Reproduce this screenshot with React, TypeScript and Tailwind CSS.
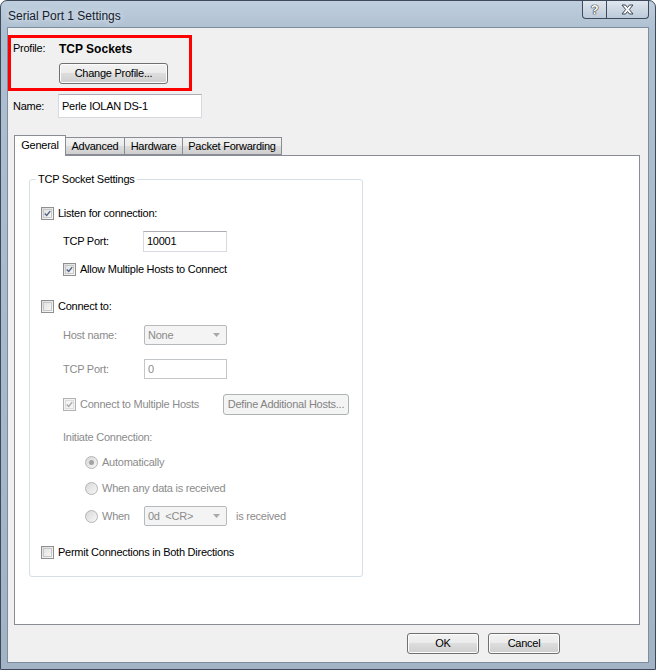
import React from "react";

const font = "font-['Liberation_Sans',Arial,sans-serif]";

const Check = ({ checked, disabled }: { checked?: boolean; disabled?: boolean }) => (
  <span
    className={`inline-flex w-[13px] h-[13px] shrink-0 items-center justify-center border ${
      disabled ? "border-[#b1b1b1] bg-[#f4f4f4]" : "border-[#8e8f8f] bg-[linear-gradient(135deg,#dcdcdc,#fbfbfb)]"
    }`}
  >
    <span className={`flex w-[9px] h-[9px] items-center justify-center border ${disabled ? "border-[#dcdcdc]" : "border-[#c7c7c7] bg-[linear-gradient(135deg,#e2e2e2,#f6f6f6)]"}`}>
      {checked && (
        <svg width="9" height="9" viewBox="0 0 9 9">
          <path
            d="M1 4.5 L3.5 7 L8 1.5"
            fill="none"
            stroke={disabled ? "#a8a8a8" : "#4d6185"}
            strokeWidth="1.8"
          />
        </svg>
      )}
    </span>
  </span>
);

const Radio = ({ selected }: { selected?: boolean }) => (
  <span className="inline-flex w-[13px] h-[13px] shrink-0 items-center justify-center rounded-full border border-[#b4b4b4] bg-[linear-gradient(135deg,#d8d8d8,#f7f7f7)]">
    {selected && <span className="w-[5px] h-[5px] rounded-full bg-[#a3a3a3]" />}
  </span>
);

const Button = ({ children, className = "" }: { children: React.ReactNode; className?: string }) => (
  <div
    className={`flex items-center justify-center rounded-[3px] border border-[#707070] bg-[linear-gradient(to_bottom,#f2f2f2_0%,#ebebeb_50%,#dddddd_50%,#cfcfcf_100%)] shadow-[inset_0_0_0_1px_#fcfcfc] text-black ${className}`}
  >
    {children}
  </div>
);

const Combo = ({ value }: { value: string }) => (
  <div className="flex w-[83px] h-[20px] items-center justify-between rounded-[2px] border border-[#b7babd] bg-[#f4f4f4] pl-[3px] pr-[6px] text-[#8b8b8b]">
    <span className="whitespace-pre">{value}</span>
    <svg width="7" height="4" viewBox="0 0 7 4">
      <path d="M0 0 H7 L3.5 4 Z" fill="#a8a8a8" />
    </svg>
  </div>
);

const Tab = ({ label, active, width }: { label: string; active?: boolean; width: string }) => (
  <div
    className={`flex items-center justify-center border border-[#898c95] ${width} ${
      active
        ? "h-[21px] bg-white border-b-0 -mb-px z-10 pb-[2px]"
        : "h-[18px] -ml-px bg-[linear-gradient(to_bottom,#f2f2f2_0%,#ebebeb_50%,#dddddd_50%,#cfcfcf_100%)]"
    }`}
  >
    {label}
  </div>
);

export default function App() {
  return (
    <div
      className={`${font} w-[656px] h-[670px] flex flex-col border border-[#3e4a59] rounded-t-[7px] bg-[linear-gradient(to_bottom,#bfcede_0px,#aebfd1_30px,#a2b3c6_100%)] text-[11px] tracking-[-0.25px] text-black`}
    >
      {/* Title bar */}
      <div className="h-[26px] flex justify-between">
        <span className="pl-[7px] pt-[6px] text-[12px] tracking-normal text-[#14202d] [text-shadow:0_0_6px_#ffffff]">
          Serial Port 1 Settings
        </span>
        <div className="flex self-start mr-[6px]">
          <div className="w-[25px] h-[18px] flex items-center justify-center border border-t-0 border-[#3f4b5a] rounded-bl-[4px] bg-[linear-gradient(to_bottom,#dfe6ee,#bccad8)]">
            <span className="text-[13px] font-bold text-white [text-shadow:0_0_1px_#222,0_0_1px_#222,0_0_1px_#222]">?</span>
          </div>
          <div className="w-[43px] h-[18px] -ml-px flex items-center justify-center border border-t-0 border-[#3f4b5a] rounded-br-[4px] bg-[linear-gradient(to_bottom,#dfe6ee,#bccad8)]">
            <svg width="13" height="11" viewBox="0 0 13 11">
              <path
                d="M1 1 H4.5 L6.5 3.5 L8.5 1 H12 L8.3 5.5 L12 10 H8.5 L6.5 7.5 L4.5 10 H1 L4.7 5.5 Z"
                fill="#ffffff"
                stroke="#3a4350"
                strokeWidth="1"
              />
            </svg>
          </div>
        </div>
      </div>

      {/* Client area */}
      <div className="mx-[6px] h-[636px] border border-[#7e8d9e] bg-[#f0f0f0] flex flex-col">
        {/* Profile */}
        <div className="mt-[7px] w-[184px] h-[56px] border-[3px] border-[#ff0000] flex flex-col">
          <div className="flex items-center pt-[4px] pl-[2px] h-[17px]">
            <span className="w-[46px]">Profile:</span>
            <span className="text-[12px] font-bold tracking-normal">TCP Sockets</span>
          </div>
          <Button className="ml-[48px] mt-[8px] w-[109px] h-[21px]">Change Profile...</Button>
        </div>

        {/* Name */}
        <div className="mt-[3px] flex items-center pl-[5px]">
          <span className="w-[45px]">Name:</span>
          <div className="w-[144px] h-[24px] border border-[#d6dadf] border-t-[#abadb3] bg-white pl-[3px] pt-[3px]">
            Perle IOLAN DS-1
          </div>
        </div>

        {/* Tabs */}
        <div className="mt-[17px] ml-[6px] flex items-end">
          <Tab label="General" active width="w-[52px]" />
          <Tab label="Advanced" width="w-[60px]" />
          <Tab label="Hardware" width="w-[59px]" />
          <Tab label="Packet Forwarding" width="w-[100px]" />
        </div>

        <div className="ml-[6px] w-[626px] h-[470px] border border-[#898c95] bg-white">
          <fieldset className="ml-[14px] mt-[17px] w-[334px] h-[404px] border border-[#d5dfe5] rounded-[3px] pl-[11px] pt-[17px]">
            <legend className="-ml-[5px] px-[2px] leading-[13px]">TCP Socket Settings</legend>

            <div className="h-[20px] flex items-center gap-[4px]">
              <Check checked />
              <span>Listen for connection:</span>
            </div>

            <div className="mt-[8px] h-[20px] flex items-center pl-[22px]">
              <span className="w-[80px]">TCP Port:</span>
              <div className="w-[84px] h-[21px] border border-[#d6dadf] border-t-[#abadb3] bg-white pl-[3px] flex items-center">
                10001
              </div>
            </div>

            <div className="mt-[8px] h-[20px] flex items-center gap-[4px] pl-[22px]">
              <Check checked />
              <span>Allow Multiple Hosts to Connect</span>
            </div>

            <div className="mt-[17px] h-[20px] flex items-center gap-[4px]">
              <Check />
              <span>Connect to:</span>
            </div>

            <div className="mt-[9px] h-[20px] flex items-center pl-[22px] text-[#8b8b8b]">
              <span className="w-[81px]">Host name:</span>
              <Combo value="None" />
            </div>

            <div className="mt-[14px] h-[20px] flex items-center pl-[22px] text-[#8b8b8b]">
              <span className="w-[81px]">TCP Port:</span>
              <div className="w-[83px] h-[20px] border border-[#c3c6c9] bg-white pl-[3px] flex items-center">0</div>
            </div>

            <div className="mt-[15px] h-[20px] flex items-center pl-[22px] text-[#8b8b8b]">
              <Check checked disabled />
              <span className="ml-[4px] w-[143px]">Connect to Multiple Hosts</span>
              <div className="w-[126px] h-[21px] flex items-center justify-center rounded-[3px] border border-[#adb2b5] bg-[#f4f4f4] text-[#838383]">
                Define Additional Hosts...
              </div>
            </div>

            <div className="mt-[13px] h-[20px] flex items-center pl-[22px] text-[#8b8b8b]">
              Initiate Connection:
            </div>

            <div className="mt-[5px] h-[20px] flex items-center gap-[4px] pl-[44px] text-[#8b8b8b]">
              <Radio selected />
              <span>Automatically</span>
            </div>

            <div className="mt-[6px] h-[20px] flex items-center gap-[4px] pl-[44px] text-[#8b8b8b]">
              <Radio />
              <span>When any data is received</span>
            </div>

            <div className="mt-[8px] h-[20px] flex items-center pl-[44px] text-[#8b8b8b]">
              <Radio />
              <span className="ml-[4px] w-[42px]">When</span>
              <Combo value="0d  <CR>" />
              <span className="ml-[9px]">is received</span>
            </div>

            <div className="mt-[16px] h-[20px] flex items-center gap-[4px]">
              <Check />
              <span>Permit Connections in Both Directions</span>
            </div>
          </fieldset>
        </div>

        {/* Bottom buttons */}
        <div className="mt-[8px] flex justify-end gap-[9px] pr-[88px]">
          <Button className="w-[72px] h-[21px]">OK</Button>
          <Button className="w-[72px] h-[21px]">Cancel</Button>
        </div>
      </div>
    </div>
  );
}
